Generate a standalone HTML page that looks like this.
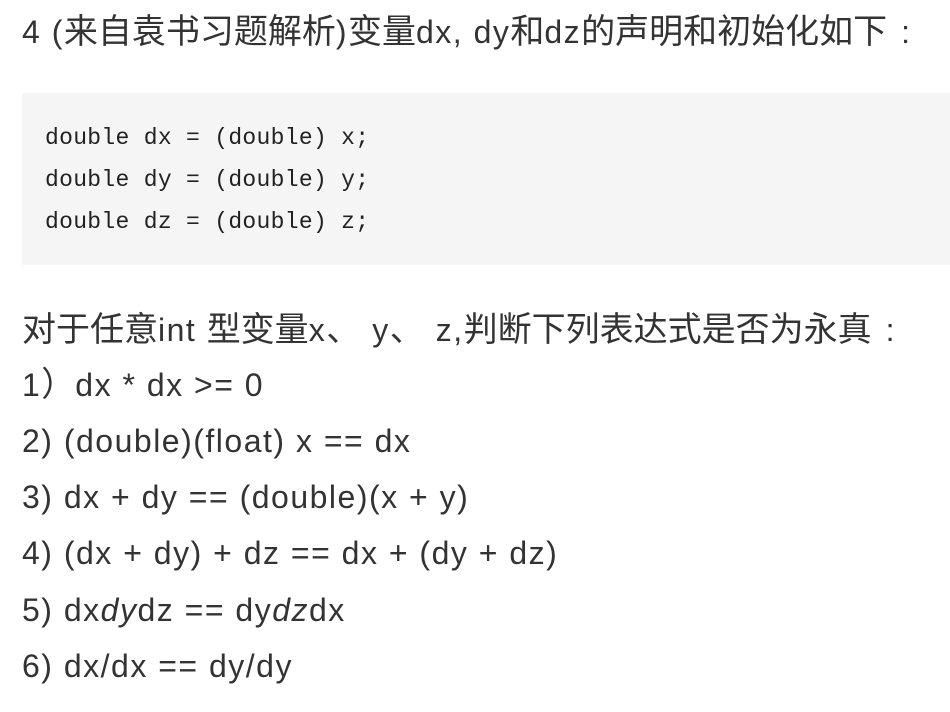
<!DOCTYPE html>
<html><head><meta charset="utf-8"><style>
body{margin:0;width:950px;height:712px;background:#fff;overflow:hidden;font-family:"Liberation Sans","Noto Sans CJK SC",sans-serif;color:#333;}
.l{position:absolute;left:22px;font-size:32px;letter-spacing:1.5px;line-height:40px;white-space:nowrap;}
.l .cj{letter-spacing:0;font-size:34px;}
.code{position:absolute;left:22px;top:93px;width:928px;height:172px;background:#f5f5f5;}
.c{position:absolute;left:45px;font-family:"Liberation Mono","DejaVu Sans Mono",monospace;font-size:23px;letter-spacing:0.3px;line-height:30px;color:#222;white-space:pre;}
</style></head><body>
<div class="l" style="top:12px">4 (<span class="cj">来自袁书习题解析</span>)<span class="cj">变量</span>dx, dy<span class="cj">和</span>dz<span class="cj">的声明和初始化如下</span><span style="margin-left:14px">:</span></div>
<div class="code"></div>
<div class="c" style="top:123px">double dx = (double) x;</div>
<div class="c" style="top:165px">double dy = (double) y;</div>
<div class="c" style="top:207px">double dz = (double) z;</div>
<div class="l" style="top:310px"><span class="cj">对于任意</span>int <span class="cj">型变量</span>x<span class="cj">、</span><span style="margin-left:12px">y</span><span class="cj">、</span><span style="margin-left:12px">z,</span><span class="cj">判断下列表达式是否为永真</span><span style="margin-left:14px">:</span></div>
<div class="l" style="top:365px">1<span class="cj">）</span>dx * dx &gt;= 0</div>
<div class="l" style="top:421px">2) (double)(float) x == dx</div>
<div class="l" style="top:477px">3) dx + dy == (double)(x + y)</div>
<div class="l" style="top:533px">4) (dx + dy) + dz == dx + (dy + dz)</div>
<div class="l" style="top:590px">5) dx<i>dy</i>dz == dy<i>dz</i>dx</div>
<div class="l" style="top:646px">6) dx/dx == dy/dy</div>
</body></html>
